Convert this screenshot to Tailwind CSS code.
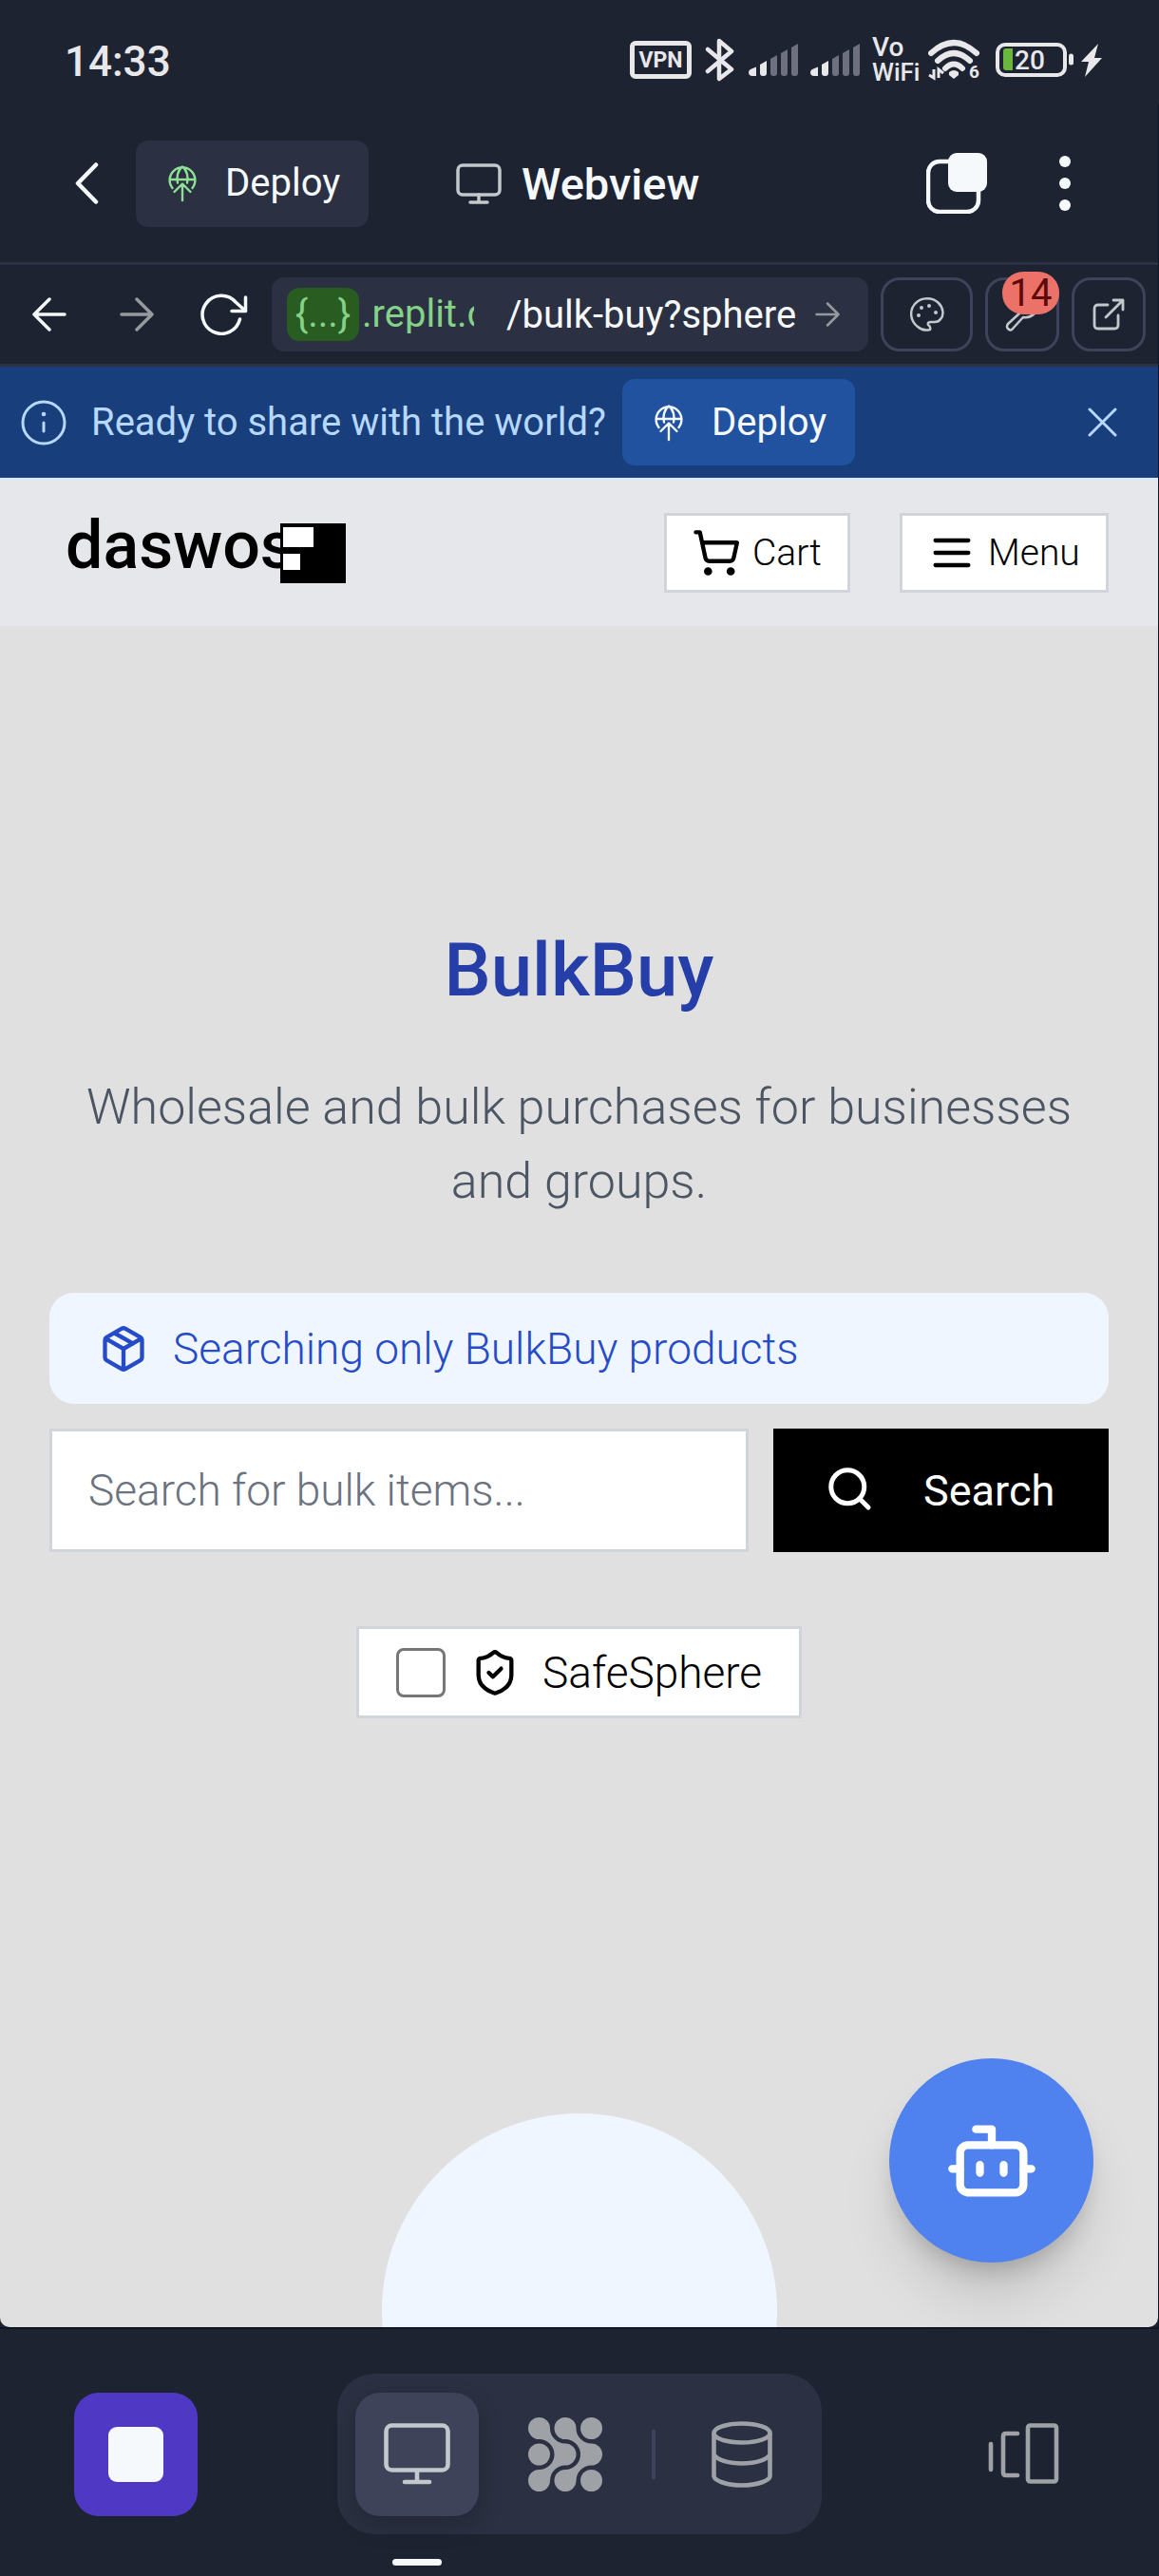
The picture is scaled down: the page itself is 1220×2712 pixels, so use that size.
<!DOCTYPE html>
<html lang="en">
<head>
<meta charset="utf-8">
<meta name="viewport" content="width=device-width, initial-scale=1">
<title>BulkBuy - Webview</title>
<script src="https://cdn.jsdelivr.net/npm/@tailwindcss/browser@4"></script>
</head>
<body class="flex min-h-screen flex-col bg-[#1e2332] font-[Roboto,sans-serif] text-[#f5f9fc]">

<!-- Shared symbols -->
<svg class="hidden" aria-hidden="true">
  <symbol id="deploy" viewBox="0 0 30 40" fill="none" stroke="currentColor" stroke-width="2.4" stroke-linecap="round" stroke-linejoin="round">
    <path d="M4.5 25A13.4 13.4 0 1 1 25.500 25M1.600 16H28.400M10 19.500C8.500 14 10 6 15 2.500C20 6 21.500 14 20 19.500M15 38V21M6.500 29L15 20.500L23.500 29"/>
  </symbol>
  <symbol id="signal" viewBox="0 0 53 34">
    <path fill="#e8e7ea" d="M0 30a4 4 0 0 1 3-3.500L8 24.500V34H4a4 4 0 0 1-4-4ZM12 22l7-4v13q0 3-3 3h-1q-3 0-3-3Z"/>
    <path fill="#6e7080" d="M23 16l7-4v19q0 3-3 3h-1q-3 0-3-3ZM34 10l7-4v25q0 3-3 3h-1q-3 0-3-3ZM45 4l7-4v31q0 3-3 3h-1q-3 0-3-3Z"/>
  </symbol>
</svg>

<!-- Status bar -->
<div class="flex h-[110px] items-center justify-between pt-4 pr-[60px] pl-[68px] text-[#e8e7ea]">
  <time class="pt-1 text-[44px] font-medium leading-none">14:33</time>
  <div class="flex items-center gap-3">
    <span class="flex h-10 w-[65px] items-center justify-center rounded-md border-[5px] border-[#e8e7ea] text-[23px] font-bold leading-none">VPN</span>
    <svg class="h-[46px] w-9" viewBox="0 0 36 46" fill="none" stroke="currentColor" stroke-width="4.500" stroke-linecap="round" stroke-linejoin="round" role="img" aria-label="Bluetooth"><path d="M5 12L30 33L17 43V3L30 14L5 35"/></svg>
    <svg class="h-[34px] w-[53px]"><use href="#signal"/></svg>
    <svg class="h-[34px] w-[53px]"><use href="#signal"/></svg>
    <span class="w-[47px] text-[26px] font-medium leading-[26px]"><span class="text-[28px]">Vo</span><br>WiFi</span>
    <svg class="h-[48px] w-[57px]" viewBox="0 0 57 48" role="img" aria-label="Wi-Fi 6">
      <g fill="none" stroke="currentColor" stroke-width="6" stroke-linecap="round"><path d="M3 17Q27 -5 51 17M10 25Q27 9 44 25M18 33Q27 24 36 33"/></g>
      <path fill="currentColor" d="M22 37Q27 33 32 37V40L27 44L22 40Z"/>
      <path d="M6 34V43L1 40M11 43V34L16 38" fill="none" stroke="currentColor" stroke-width="3"/>
      <text x="43" y="43" fill="currentColor" font-size="19" font-weight="700">6</text>
    </svg>
    <svg class="h-9 w-[114px]" viewBox="0 0 114 36" role="img" aria-label="Battery 20 percent, charging">
      <rect x="4" y="2" width="71" height="32" rx="8" fill="none" stroke="currentColor" stroke-width="4"/>
      <path fill="#6bb63c" d="M13 6h7v23h-7q-3 0-3-3V9q0-3 3-3Z"/>
      <path stroke="currentColor" stroke-width="5" stroke-linecap="round" d="M81.500 14v7"/>
      <text x="22" y="28" fill="currentColor" font-size="28" font-weight="500">20</text>
      <path fill="currentColor" d="M110 1L92 20h8l-4 16L114 16h-8Z"/>
    </svg>
  </div>
</div>

<div class="flex flex-1 flex-col border-r border-[#0e1525]">

  <!-- App bar -->
  <header class="flex h-[169px] items-center border-b-[3px] border-[#2b3042] pr-[78px] pl-[66px]">
    <button class="flex h-[90px] w-[77px] items-center pl-[13px]" aria-label="Back"><svg class="h-[44px] w-[26px]" viewBox="0 0 26 44" fill="none" stroke="currentColor" stroke-width="4.500" stroke-linecap="round" stroke-linejoin="round"><path d="M22 2.500L3 22L22 41.500"/></svg></button>
    <button class="flex h-[91px] w-[245px] items-center gap-[30px] rounded-[13px] bg-[#2b3042] pl-[34px] text-[40px] leading-none"><svg class="h-10 w-[30px] text-[#8fe196]"><use href="#deploy"/></svg>Deploy</button>
    <div class="flex flex-1 items-center gap-[21px] pl-[92px]">
      <svg class="h-[43px] w-12 text-[#c2c8cc]" viewBox="0 0 48 43" fill="none" stroke="currentColor" stroke-width="3.500" stroke-linecap="round"><rect x="2" y="2" width="44" height="31" rx="5"/><path d="M24 33v8M15 41h18"/></svg>
      <h2 class="text-[47px] font-medium leading-none">Webview</h2>
    </div>
    <button aria-label="Tabs" class="mr-[76px]"><svg class="h-16 w-16" viewBox="0 0 64 64"><rect x="2" y="9" width="53" height="53" rx="12" fill="none" stroke="currentColor" stroke-width="4.500"/><rect x="23" y="0" width="41" height="41" rx="9" fill="currentColor"/></svg></button>
    <button aria-label="More options"><svg class="h-[60px] w-[26px]" viewBox="0 0 26 60" fill="currentColor"><circle cx="6" cy="7" r="6"/><circle cx="6" cy="30" r="6"/><circle cx="6" cy="53" r="6"/></svg></button>
  </header>

  <!-- Browser toolbar -->
  <nav class="flex h-[107px] items-center gap-[13px] border-b-[3px] border-[#2b3042] pr-[13px] pl-[6px]" aria-label="Browser">
    <div class="flex w-[267px] items-center">
      <button class="flex w-[92px] justify-center" aria-label="Go back"><svg class="h-9 w-9" viewBox="0 0 36 36" fill="none" stroke="currentColor" stroke-width="3.500" stroke-linecap="round" stroke-linejoin="round"><path d="M34 18H2M18 2L2 18L18 34"/></svg></button>
      <button class="flex w-[92px] justify-center text-[#969a9f]" aria-label="Go forward"><svg class="h-9 w-9" viewBox="0 0 36 36" fill="none" stroke="currentColor" stroke-width="3.500" stroke-linecap="round" stroke-linejoin="round"><path d="M2 18H34M18 2L34 18L18 34"/></svg></button>
      <button class="flex w-[83px] justify-end pr-[12px]" aria-label="Reload"><svg class="h-[44px] w-[50px]" viewBox="0 0 50 44" fill="none" stroke="currentColor" stroke-width="3.500" stroke-linecap="round" stroke-linejoin="round"><path d="M41.500 27A20 20 0 1 1 37 9L47.500 18.500M47.500 4V18.500H33"/></svg></button>
    </div>
    <div class="flex h-[78px] min-w-0 flex-1 items-center rounded-[13px] bg-[#2b3042] pl-4 text-[40px] leading-none">
      <div class="flex w-[202px] shrink-0 items-center overflow-hidden whitespace-nowrap text-[#85d187]"><span class="mr-[3px] flex h-14 w-[76px] shrink-0 items-center justify-center rounded-[13px] bg-[#285c20]">{...}</span><span class="w-[118px] overflow-hidden">.replit.dev</span></div>
      <input type="text" aria-label="Path" value="/bulk-buy?sphere" class="ml-[29px] h-14 min-w-0 flex-1 bg-transparent leading-none outline-none">
      <button class="mr-[30px] ml-3 text-[#969a9f]" aria-label="Go"><svg class="h-[26px] w-[26px]" viewBox="0 0 26 26" fill="none" stroke="currentColor" stroke-width="2.500" stroke-linecap="round" stroke-linejoin="round"><path d="M1.500 13H24.500M13 1.500L24.500 13L13 24.500"/></svg></button>
    </div>
    <button class="flex h-[78px] w-[97px] items-center justify-center rounded-[20px] border-[3px] border-[#3f435a] text-[#c2c8cc]" aria-label="Theme"><svg class="h-9 w-9" viewBox="0 0 36 36" fill="none" stroke="currentColor" stroke-width="2.500" stroke-linejoin="round"><path d="M21 34Q14 36 8 31C0 25-1 14 5 7C12-1 24 0 30 6C35 11 36 19 32 23Q30 26 26 26H22Q18 26 19 29Q22 31 21 34Z"/><g fill="currentColor" stroke="none"><circle cx="9" cy="19" r="2"/><circle cx="12" cy="11" r="2"/><circle cx="20" cy="9" r="2"/><circle cx="27" cy="16" r="2"/></g></svg></button>
    <button class="relative flex h-[78px] w-[78px] items-center justify-center rounded-[20px] border-[3px] border-[#3f435a] text-[#c2c8cc]" aria-label="Developer tools, 14 errors">
      <svg class="h-9 w-9" viewBox="0 0 36 36" fill="none" stroke="currentColor" stroke-width="2.500" stroke-linejoin="round" stroke-linecap="round"><path d="M15 17L3 28Q1 31 3 33Q6 36 8 33L19 21Q26 22 31 17Q34 12 32 7L26 13L22 9L28 3Q20 1 16 6Q13 11 15 17Z"/></svg>
      <span class="absolute -top-[9px] -right-[3px] flex h-[45px] w-[60px] items-center justify-center rounded-[22px] bg-[#ec7269] text-[40px] leading-none text-[#5c0b08]">14</span>
    </button>
    <a href="#" class="flex h-[78px] w-[78px] items-center justify-center rounded-[20px] border-[3px] border-[#3f435a] text-[#c2c8cc]" aria-label="Open in new tab"><svg class="h-9 w-9" viewBox="0 0 36 36" fill="none" stroke="currentColor" stroke-width="2.800" stroke-linejoin="round" stroke-linecap="round"><path d="M17 8H7Q3 8 3 12V29Q3 33 7 33H24Q28 33 28 29V19M23 3H33V13M33 3L15 21"/></svg></a>
  </nav>

  <!-- Deploy banner -->
  <section class="flex h-[117px] items-center bg-[#183e7c] pr-[43px] pl-[22px] text-[#b6d8fd]">
    <svg class="h-[48px] w-12" viewBox="0 0 48 48" fill="none" stroke="currentColor" stroke-width="3" stroke-linecap="round"><circle cx="24" cy="24" r="22"/><path d="M24 24v9"/><circle cx="24" cy="15" r="2.300" fill="currentColor" stroke="none"/></svg>
    <p class="w-[585px] pl-[26px] text-[40px] leading-none whitespace-nowrap">Ready to share with the world?</p>
    <button class="flex h-[91px] w-[245px] items-center gap-[30px] rounded-[13px] bg-[#2152a0] pl-[34px] text-[40px] leading-none text-[#f5f9fc]"><svg class="h-10 w-[30px]"><use href="#deploy"/></svg>Deploy</button>
    <button class="ml-auto" aria-label="Dismiss"><svg class="h-[31px] w-[31px]" viewBox="0 0 31 31" fill="none" stroke="currentColor" stroke-width="3" stroke-linecap="round"><path d="M2 2L29 29M29 2L2 29"/></svg></button>
  </section>

  <!-- Site preview -->
  <div class="relative flex flex-1 flex-col overflow-hidden rounded-b-[10px] bg-[#e0e0e0] text-black">
    <header class="flex h-[156px] items-center gap-[52px] border-t-2 border-[#deebfa] bg-[#e5e7eb] pr-[52px] pl-[69px]">
      <a href="#" class="flex flex-1 items-center" aria-label="daswos home">
        <span class="pb-4 text-[70px] font-medium leading-none">daswos</span>
        <svg class="-ml-[15px] h-[63px] w-[69px]" viewBox="0 0 69 63"><path d="M0 0H69V63H0Z"/><path fill="#fff" d="M3 4H35V25H3ZM3 32H21V49H3Z"/></svg>
      </a>
      <button class="flex h-[84px] w-[196px] items-center gap-3 border-[3px] border-[#d1d5db] bg-white pl-[26px] text-[39px] font-light leading-none"><svg class="h-[52px] w-[52px]" viewBox="0 0 24 24" fill="none" stroke="currentColor" stroke-width="2" stroke-linecap="round" stroke-linejoin="round"><circle cx="8" cy="21" r="1"/><circle cx="19" cy="21" r="1"/><path d="M2.050 2.050h2l2.660 12.420a2 2 0 0 0 2 1.580h9.780a2 2 0 0 0 1.950-1.570l1.650-7.430H5.120"/></svg>Cart</button>
      <button class="flex h-[84px] w-[220px] items-center gap-3 border-[3px] border-[#d1d5db] bg-white pl-[26px] text-[39px] font-light leading-none"><svg class="h-[52px] w-[52px]" viewBox="0 0 24 24" fill="none" stroke="currentColor" stroke-width="2" stroke-linecap="round"><path d="M4 6h16M4 12h16M4 18h16"/></svg>Menu</button>
    </header>

    <main class="flex flex-1 flex-col items-center px-[52px] pt-[324px]">
      <h1 class="text-[78px] font-medium leading-none text-[#253ea8]">BulkBuy</h1>
      <p class="mt-[66px] text-center text-[52px] font-light leading-[78px] text-[#4b5563]">Wholesale and bulk purchases for businesses and groups.</p>
      <div class="mt-[78px] flex h-[117px] w-full items-center gap-[26px] rounded-[26px] bg-[#eff6ff] px-[52px] text-[46px] font-light leading-none text-[#264bc8]">
        <svg class="h-[52px] w-[52px]" viewBox="0 0 24 24" fill="none" stroke="currentColor" stroke-width="2" stroke-linecap="round" stroke-linejoin="round"><path d="m7.500 4.270 9 5.150M21 8a2 2 0 0 0-1-1.730l-7-4a2 2 0 0 0-2 0l-7 4A2 2 0 0 0 3 8v8a2 2 0 0 0 1 1.730l7 4a2 2 0 0 0 2 0l7-4A2 2 0 0 0 21 16ZM3.300 7l8.700 5 8.700-5M12 22V12"/></svg>
        Searching only BulkBuy products
      </div>
      <form class="mt-[26px] flex h-[130px] w-full gap-[26px]">
        <input type="search" aria-label="Search for bulk items" placeholder="Search for bulk items..." class="min-w-0 flex-1 border-[3px] border-[#d1d5db] bg-white px-[38px] text-[46px] font-light placeholder:text-[#6b7280]">
        <button type="button" class="flex w-[353px] items-center gap-[46px] bg-black pl-[52px] text-[45px] leading-none text-white"><svg class="h-[60px] w-[60px]" viewBox="0 0 24 24" fill="none" stroke="currentColor" stroke-width="2" stroke-linecap="round"><circle cx="10.500" cy="10.500" r="7"/><path d="M19.200 19.200l-3.600-3.600"/></svg>Search</button>
      </form>
      <label class="mt-[78px] flex h-[97px] w-[469px] items-center border-[3px] border-[#d1d5db] bg-white pl-[39px] text-[46px] font-light leading-none">
        <input type="checkbox" class="size-[52px] appearance-none rounded-lg border-[3px] border-[#767676] bg-white">
        <svg class="mr-6 ml-[26px] h-[52px] w-[52px]" viewBox="0 0 24 24" fill="none" stroke="currentColor" stroke-width="2" stroke-linecap="round" stroke-linejoin="round"><path d="M20 13c0 5-3.500 7.500-7.660 8.950a1 1 0 0 1-.67-.01C7.500 20.500 4 18 4 13V6a1 1 0 0 1 1-1c2 0 4.500-1.200 6.240-2.720a1.170 1.170 0 0 1 1.520 0C14.510 3.810 17 5 19 5a1 1 0 0 1 1 1z"/><path d="m9 12 2 2 4-4"/></svg>
        SafeSphere
      </label>
      <div class="mt-auto h-[225px] overflow-hidden"><div class="size-[416px] rounded-full bg-[#eff6ff]"></div></div>
    </main>

    <button class="absolute right-[68px] bottom-[68px] flex size-[215px] items-center justify-center rounded-full bg-[#4f82ee] text-white shadow-[0_40px_60px_-10px_rgba(0,0,0,0.15),0_16px_26px_-10px_rgba(0,0,0,0.2)]" aria-label="Open assistant"><svg class="h-[100px] w-[100px]" viewBox="0 0 24 24" fill="none" stroke="currentColor" stroke-width="2" stroke-linecap="round" stroke-linejoin="round"><path d="M12 8V4H8M2 14h2M20 14h2M15 13v2M9 13v2"/><rect x="4" y="8" width="16" height="12" rx="2"/></svg></button>
  </div>
</div>

<!-- Workspace tabs -->
<footer class="flex h-[262px] items-start border-t-2 border-[#0e1525] pt-[47px] pr-[104px] pl-[78px]">
  <button class="mt-5 flex size-[130px] items-center justify-center rounded-[26px] bg-[#4e38c4]" aria-label="Stop"><span class="size-[58px] rounded-[9px] bg-[#f5f9fc]"></span></button>
  <div class="ml-[147px] flex h-[169px] w-[510px] items-center rounded-[39px] bg-[#2b3042] px-[19px] text-[#9ea2a7]">
    <div class="relative">
      <button class="flex size-[130px] items-center justify-center rounded-[26px] bg-[#3f4359] text-[#c2c8cc] shadow-[0_10px_26px_rgba(0,0,0,0.18)]" aria-label="Webview"><svg class="h-[66px] w-[70px]" viewBox="0 0 70 66" fill="none" stroke="currentColor" stroke-width="4.600" stroke-linecap="round"><rect x="2.500" y="2.500" width="65" height="47" rx="6"/><path d="M35 50v11M22 62h26"/></svg></button>
      <span class="absolute -bottom-[52px] left-[39px] h-[7px] w-[52px] rounded-full bg-[#f5f9fc]"></span>
    </div>
    <button class="ml-[26px] flex size-[130px] items-center justify-center" aria-label="Agent"><svg class="size-[78px]" viewBox="0 0 78 78" fill="currentColor"><circle cx="11.500" cy="39" r="11.500"/><circle cx="66.500" cy="11.500" r="11.500"/><circle cx="66.500" cy="66.500" r="11.500"/><path d="M23 11.500A16 16 0 0 0 39 27.500A11.500 11.500 0 0 1 39 50.500A16 16 0 0 0 23 66.500A11.500 11.500 0 1 1 11.500 55A16 16 0 0 0 11.500 23A11.500 11.500 0 1 1 23 11.500Z"/><path d="M50.500 11.500A16 16 0 0 0 66.500 27.500A11.500 11.500 0 0 1 66.500 50.500A16 16 0 0 0 50.500 66.500A11.500 11.500 0 1 1 39 55A16 16 0 0 0 39 23A11.500 11.500 0 1 1 50.500 11.500Z"/></svg></button>
    <span class="ml-[26px] h-[52px] w-1 bg-[#3f4359]"></span>
    <button class="ml-[26px] flex size-[130px] items-center justify-center" aria-label="Database"><svg class="h-[70px] w-16" viewBox="0 0 64 70" fill="none" stroke="currentColor" stroke-width="4.600"><ellipse cx="32" cy="12.500" rx="29.500" ry="10"/><path d="M2.500 12.500V58C3 62 14 67.500 32 67.500S61 62 61.500 58V12.500M2.500 35C5 40 16 44.500 32 44.500S59 40 61.500 35"/></svg></button>
  </div>
  <button class="mt-[52px] ml-auto text-[#9ea2a7]" aria-label="Tab switcher"><svg class="h-[64px] w-[76px]" viewBox="0 0 76 64" fill="none" stroke="currentColor" stroke-width="4.600" stroke-linecap="round" stroke-linejoin="round"><rect x="42" y="2.500" width="30" height="59" rx="2.500"/><path d="M31 11H19Q16 11 16 14V52Q16 55 19 55H31M3 22V49"/></svg></button>
</footer>
</body>
</html>
